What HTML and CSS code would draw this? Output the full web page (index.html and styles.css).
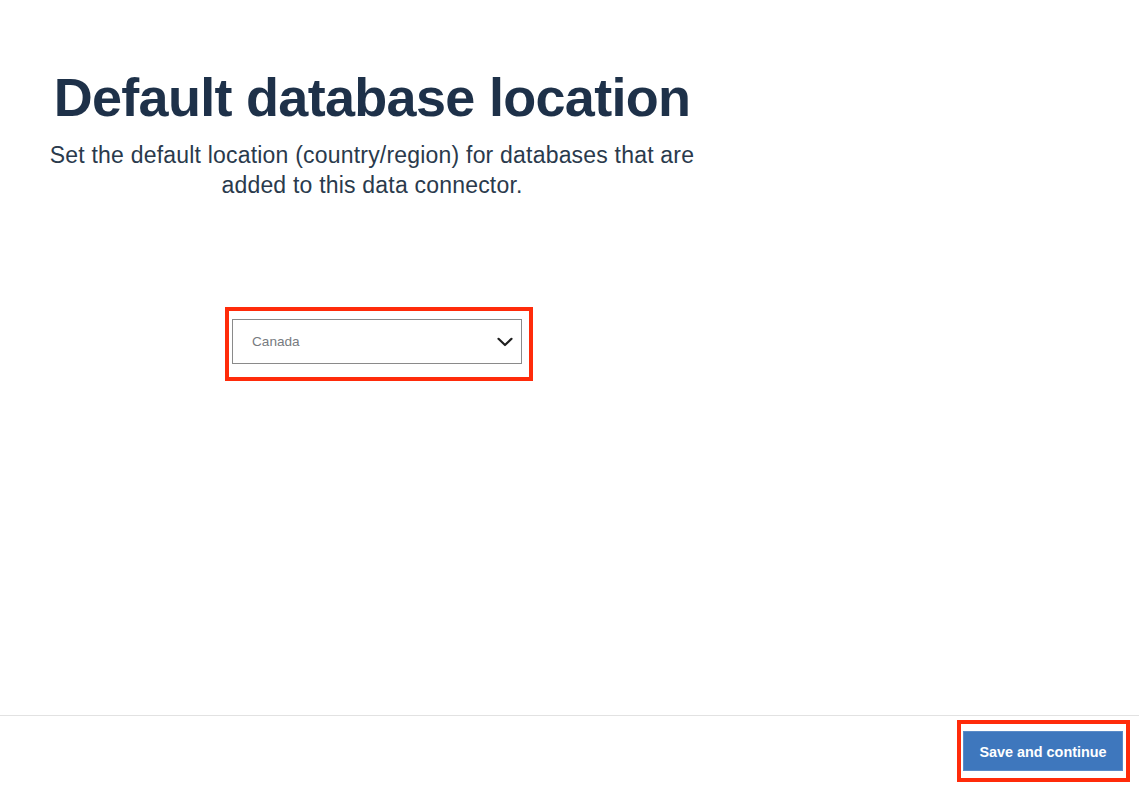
FILE: index.html
```html
<!DOCTYPE html>
<html lang="en">
<head>
<meta charset="utf-8">
<title>Default database location</title>
<link rel="stylesheet" href="styles.css">
</head>
<body>
<div class="page">
  <main class="main">
    <div class="intro">
      <h1 class="title">Default database location</h1>
      <p class="subtitle">Set the default location (country/region) for databases that are added to this data connector.</p>
    </div>
    <div class="highlight highlight-select">
      <div class="select">
        <span class="select-value">Canada</span>
        <svg class="chevron" width="16" height="10" viewBox="0 0 16 10" aria-hidden="true">
          <path d="M1.5 1.8 L8 8 L14.5 1.8" fill="none" stroke="#1f1f1f" stroke-width="2.2" stroke-linecap="round" stroke-linejoin="round"/>
        </svg>
      </div>
    </div>
  </main>
  <footer class="footer">
    <div class="highlight highlight-button">
      <button class="btn-primary" type="button">Save and continue</button>
    </div>
  </footer>
</div>
</body>
</html>
```

FILE: styles.css
```css
* {
  box-sizing: border-box;
}

html, body {
  margin: 0;
  padding: 0;
  background: #ffffff;
}

body {
  font-family: "Liberation Sans", Arial, sans-serif;
  color: #1f3148;
}

.page {
  display: flex;
  flex-direction: column;
  height: 785px;
}

.main {
  flex: 1;
  display: flex;
  flex-direction: column;
  align-items: flex-start;
  padding-top: 65px;
}

.intro {
  width: 744px;
  text-align: center;
}

.title {
  margin: 0;
  font-size: 54px;
  line-height: 64px;
  font-weight: 700;
  letter-spacing: -0.7px;
  color: #1e3149;
}

.subtitle {
  margin: 11px auto 0;
  max-width: 700px;
  font-size: 23px;
  line-height: 30px;
  letter-spacing: 0.2px;
  color: #2a3a4c;
}

.highlight {
  border: 4px solid #ff2b0a;
}

.highlight-select {
  margin-top: 107px;
  margin-left: 225px;
  padding: 8px 7px 13px 3px;
}

.select {
  width: 290px;
  height: 45px;
  border: 1px solid #8a8a8a;
  background: #ffffff;
  display: flex;
  align-items: center;
  justify-content: space-between;
  padding: 0 8px 0 19px;
}

.select-value {
  font-size: 13.6px;
  color: #777b80;
}

.chevron {
  display: block;
}

.footer {
  border-top: 1px solid #e2e2e2;
  display: flex;
  justify-content: flex-end;
  padding: 4px 9px 3px 0;
}

.highlight-button {
  padding: 7px 3px 7px 2px;
}

.btn-primary {
  display: block;
  width: 160px;
  height: 40px;
  padding: 1px 0 0;
  border: 1px solid #5a8bc8;
  background: #3e77bd;
  color: #ffffff;
  font-family: "Liberation Sans", Arial, sans-serif;
  font-size: 14.4px;
  font-weight: 700;
  cursor: pointer;
}
```
